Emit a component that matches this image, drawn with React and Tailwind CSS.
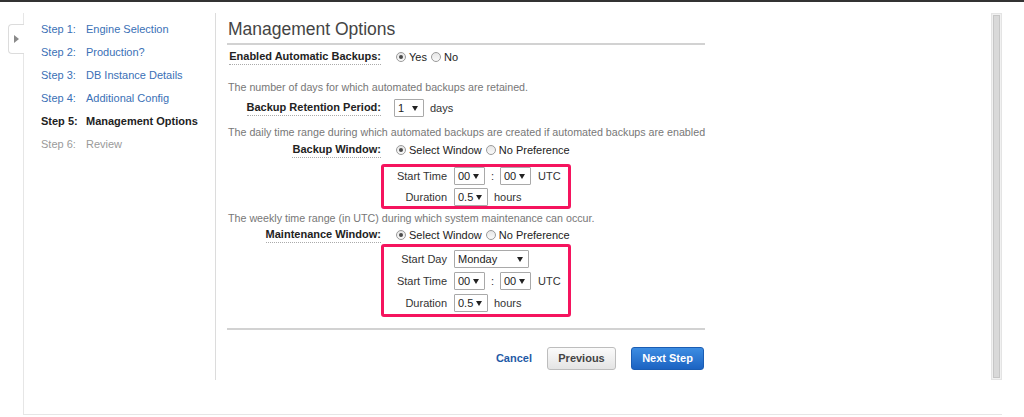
import React from "react";

const Arrow = () => (
  <svg width="6" height="5" viewBox="0 0 6 5" className="shrink-0">
    <path d="M0 0 L6 0 L3 5 Z" fill="#222" />
  </svg>
);

const Select = ({ value, w }) => (
  <div
    className="h-[18px] border border-[#a9a9a9] bg-white flex items-center justify-between pl-[3px] pr-[5px] text-[11px] text-[#222] rounded-[1px]"
    style={{ width: w }}
  >
    <span>{value}</span>
    <Arrow />
  </div>
);

const Radio = ({ checked, label }) => (
  <div className="flex items-center">
    <span className="w-[10px] h-[10px] rounded-full border border-[#9a9a9a] bg-gradient-to-b from-[#e6e6e6] to-[#fafafa] flex items-center justify-center">
      {checked && <span className="w-[4px] h-[4px] rounded-full bg-[#4a4a4a]" />}
    </span>
    <span className="ml-[3px] text-[11px] text-[#222]">{label}</span>
  </div>
);

const Label = ({ children }) => (
  <div className="w-[153px] flex justify-end shrink-0">
    <span className="font-bold text-[11px] whitespace-nowrap leading-[14px] text-[#222] border-b border-dotted border-[#aaa] pb-[1px]">
      {children}
    </span>
  </div>
);

const BoxRow = ({ label, children }) => (
  <div className="h-[18px] flex items-center">
    <div className="w-[63px] text-right text-[11px] text-[#333] shrink-0">{label}</div>
    <div className="ml-[7px] flex items-center">{children}</div>
  </div>
);

const TimeRow = () => (
  <BoxRow label="Start Time">
    <Select value="00" w={31} />
    <span className="mx-[5px] text-[11px] text-[#333] w-[5px] text-center">:</span>
    <Select value="00" w={31} />
    <span className="ml-[7px] text-[11px] text-[#333]">UTC</span>
  </BoxRow>
);

const DurRow = () => (
  <BoxRow label="Duration">
    <Select value="0.5" w={34} />
    <span className="ml-[6px] text-[11px] text-[#333]">hours</span>
  </BoxRow>
);

export default function App() {
  const steps = [
    ["Step 1:", "Engine Selection", "link"],
    ["Step 2:", "Production?", "link"],
    ["Step 3:", "DB Instance Details", "link"],
    ["Step 4:", "Additional Config", "link"],
    ["Step 5:", "Management Options", "active"],
    ["Step 6:", "Review", "disabled"],
  ];
  return (
    <div
      className="w-[1024px] h-[417px] bg-white relative overflow-hidden"
      style={{ fontFamily: '"Liberation Sans", Arial, sans-serif' }}
    >
      <div className="h-[2px] bg-[#333]" />
      <div className="ml-[23px] mt-[11px] w-[979px] h-[402px] border-l border-b border-[#e6e6e6] flex items-start">
        {/* Sidebar */}
        <div className="w-[192px] h-[367px] border-r border-[#dcdcdc] pt-[5px] pl-[17px] shrink-0">
          {steps.map(([s, n, t]) => (
            <div
              key={s}
              className={
                "h-[23px] flex items-center text-[11px] " +
                (t === "link"
                  ? "text-[#3a70b6]"
                  : t === "active"
                  ? "text-[#222] font-bold"
                  : "text-[#9a9a9a]")
              }
            >
              <span className="w-[45px] shrink-0">{s}</span>
              <span>{n}</span>
            </div>
          ))}
        </div>

        {/* Content */}
        <div className="pl-[12px] w-[490px] shrink-0 flex flex-col">
          <h1 className="mt-[4px] h-[24px] leading-[24px] text-[17.5px] text-[#444] font-normal">
            Management Options
          </h1>
          <div className="mt-[2px] h-[2px] bg-[#d2d2d2] w-[478px] -ml-[1px]" />

          <div className="mt-[2px] h-[20px] flex items-center">
            <Label>Enabled Automatic Backups:</Label>
            <div className="ml-[15px] flex items-center gap-[4px]">
              <Radio checked label="Yes" />
              <Radio label="No" />
            </div>
          </div>

          <div className="mt-[13px] h-[14px] leading-[14px] text-[10.7px] text-[#777]">
            The number of days for which automated backups are retained.
          </div>

          <div className="mt-[4px] h-[20px] flex items-center">
            <Label>Backup Retention Period:</Label>
            <div className="ml-[13px] flex items-center">
              <Select value="1" w={30} />
              <span className="ml-[6px] text-[11px] text-[#333]">days</span>
            </div>
          </div>

          <div className="mt-[7px] h-[14px] leading-[14px] text-[10.7px] text-[#777] whitespace-nowrap">
            The daily time range during which automated backups are created if automated backups are enabled
          </div>

          <div className="mt-[1px] h-[20px] flex items-center">
            <Label>Backup Window:</Label>
            <div className="ml-[15px] flex items-center gap-[4px]">
              <Radio checked label="Select Window" />
              <Radio label="No Preference" />
            </div>
          </div>

          <div className="mt-[4px] ml-[153px] w-[190px] border-[3px] border-[#f5145e] rounded-[3px] flex flex-col gap-[3px]">
            <TimeRow />
            <DurRow />
          </div>

          <div className="mt-[2px] h-[14px] leading-[14px] text-[10.7px] text-[#777] whitespace-nowrap">
            The weekly time range (in UTC) during which system maintenance can occur.
          </div>

          <div className="mt-[1px] h-[18px] flex items-center">
            <Label>Maintenance Window:</Label>
            <div className="ml-[15px] flex items-center gap-[4px]">
              <Radio checked label="Select Window" />
              <Radio label="No Preference" />
            </div>
          </div>

          <div className="ml-[153px] w-[190px] border-[3px] border-[#f5145e] rounded-[3px] pt-[3px] pb-[2px] flex flex-col gap-[4px]">
            <BoxRow label="Start Day">
              <Select value="Monday" w={75} />
            </BoxRow>
            <TimeRow />
            <DurRow />
          </div>

          <div className="mt-[11px] h-[2px] bg-[#d2d2d2] w-[478px] -ml-[1px]" />

          <div className="mt-[17px] h-[23px] flex items-center justify-end w-[476px]">
            <span className="text-[11px] font-bold text-[#1f5aa6] mr-[15px]">Cancel</span>
            <div className="h-[23px] w-[69px] rounded-[3px] border border-[#bdbdbd] bg-gradient-to-b from-[#fbfbfb] to-[#e4e4e4] flex items-center justify-center text-[11px] font-bold text-[#444]">
              Previous
            </div>
            <div className="ml-[15px] h-[23px] w-[73px] rounded-[3px] border border-[#1b5db3] bg-gradient-to-b from-[#3d8de2] to-[#1c63c2] flex items-center justify-center text-[11px] font-bold text-white">
              Next Step
            </div>
          </div>
        </div>

        {/* Scrollbar */}
        <div className="ml-auto w-[11px] h-[367px] bg-[#f1f1f1] border border-[#e4e4e4] p-[1px] shrink-0">
          <div className="h-full bg-[#d9d9d9] border border-[#c6c6c6]" />
        </div>
      </div>

      {/* Side tab */}
      <div className="absolute left-[8px] top-[24px] w-[16px] h-[30px] bg-white border border-r-0 border-[#dcdcdc] rounded-l-[4px] flex items-center justify-center">
        <svg width="5" height="8" viewBox="0 0 5 8">
          <path d="M0 0 L5 4 L0 8 Z" fill="#8a8a8a" />
        </svg>
      </div>
    </div>
  );
}
